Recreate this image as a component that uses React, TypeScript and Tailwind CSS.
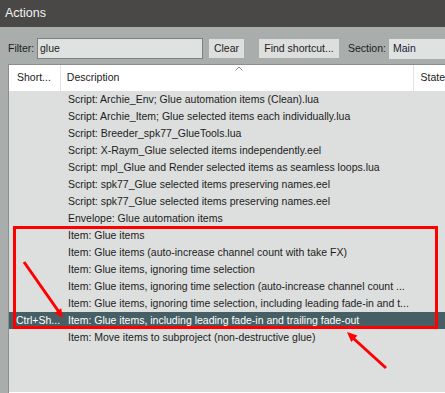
import React from "react";

const rows: { s?: string; d: string; sel?: boolean }[] = [
  { d: "Script: Archie_Env; Glue automation items (Clean).lua" },
  { d: "Script: Archie_Item; Glue selected items each individually.lua" },
  { d: "Script: Breeder_spk77_GlueTools.lua" },
  { d: "Script: X-Raym_Glue selected items independently.eel" },
  { d: "Script: mpl_Glue and Render selected items as seamless loops.lua" },
  { d: "Script: spk77_Glue selected items preserving names.eel" },
  { d: "Script: spk77_Glue selected items preserving names.eel" },
  { d: "Envelope: Glue automation items" },
  { d: "Item: Glue items" },
  { d: "Item: Glue items (auto-increase channel count with take FX)" },
  { d: "Item: Glue items, ignoring time selection" },
  { d: "Item: Glue items, ignoring time selection (auto-increase channel count ..." },
  { d: "Item: Glue items, ignoring time selection, including leading fade-in and t..." },
  { s: "Ctrl+Sh...", d: "Item: Glue items, including leading fade-in and trailing fade-out", sel: true },
  { d: "Item: Move items to subproject (non-destructive glue)" },
];

export default function App() {
  return (
    <div className="relative w-[445px] h-[393px] overflow-hidden bg-[#a9aeac] font-['Liberation_Sans',Arial,sans-serif] text-[10.5px] text-[#1c1c22]">
      <div className="h-[27px] bg-[#494846] text-[#f2f2f2] text-[12.5px] pl-[5px] flex items-center">Actions</div>
      <div className="flex items-center h-[21px] mt-[11px] mb-[5px] pl-[8px] whitespace-nowrap">
        <span className="w-[29px]">Filter:</span>
        <div className="w-[166px] h-[21px] bg-[#e0e2e1] border border-[#7d8180] pl-[2px] flex items-center">glue</div>
        <div className="ml-[6px] w-[35px] h-[19px] bg-[#dcdfde] flex items-center justify-center">Clear</div>
        <div className="ml-[15px] w-[80px] h-[19px] bg-[#dcdfde] flex items-center justify-center">Find shortcut...</div>
        <span className="ml-[9px] w-[41px]">Section:</span>
        <div className="flex-1 h-[20px] bg-[#e0e2e1] pl-[4px] flex items-center text-[#1a1a3a]">Main</div>
      </div>
      <div className="ml-[8px] h-[329px] bg-[#dcdfde] border-l border-t border-[#8a8e8d] flex flex-col">
        <div className="relative h-[26px] bg-white flex shrink-0">
          <div className="w-[52px] pl-[8px] flex items-center border-r border-[#e3e3e3]">Short...</div>
          <div className="w-[355px] pl-[6px] flex items-center border-r border-[#e3e3e3]">Description</div>
          <div className="flex-1 pl-[6px] flex items-center">State</div>
          <svg className="absolute left-[226px] top-[1px]" width="8" height="5" viewBox="0 0 8 5">
            <path d="M0.5 4.5 L4 1 L7.5 4.5" fill="none" stroke="#8a8a8a" strokeWidth="1" />
          </svg>
        </div>
        {rows.map((r, i) => (
          <div key={i} className={`h-[17px] flex items-center whitespace-nowrap shrink-0 ${r.sel ? "bg-[#455f64] text-white" : ""}`}>
            <div className="w-[52px] pl-[7px]">{r.s ?? ""}</div>
            <div className="pl-[7px]">{r.d}</div>
          </div>
        ))}
        <div className="flex-1" />
        <div className="h-[1px] bg-white shrink-0" />
      </div>
      <svg className="absolute left-0 top-0 pointer-events-none" width="445" height="393" viewBox="0 0 445 393">
        <rect x="14.5" y="227.5" width="422" height="100" fill="none" stroke="#ff0000" strokeWidth="3" />
        <line x1="24" y1="262" x2="59" y2="312" stroke="#ff0000" strokeWidth="3" />
        <polygon points="63,318 54.6,312.9 61.2,308.3" fill="#ff0000" />
        <line x1="386" y1="368" x2="353" y2="338" stroke="#ff0000" strokeWidth="3" />
        <polygon points="347,332 357.4,335.5 351.3,342.1" fill="#ff0000" />
      </svg>
    </div>
  );
}
